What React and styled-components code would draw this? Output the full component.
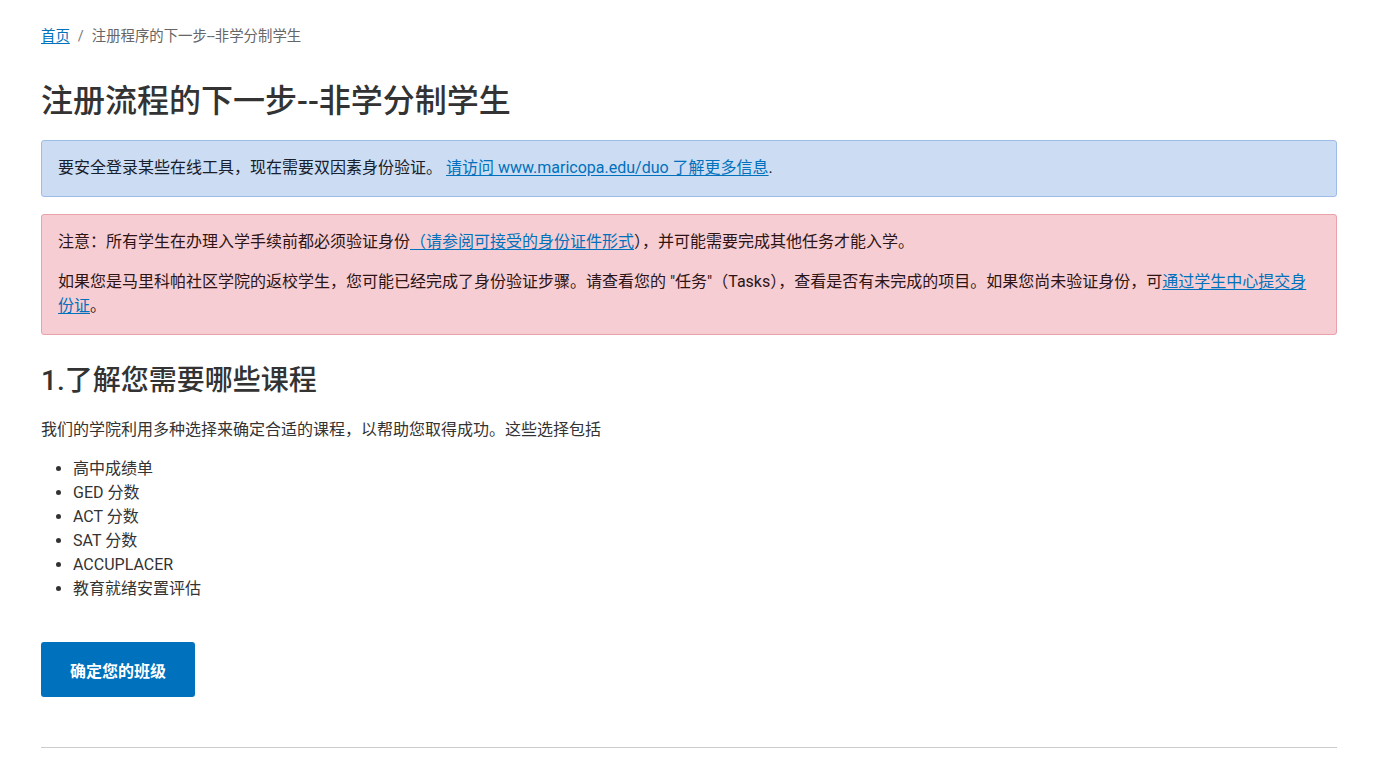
import React from "react";
import styled, { createGlobalStyle } from "styled-components";

const Global = createGlobalStyle`
  * { box-sizing: border-box; }
  body {
    margin: 0;
    background: #fff;
    font-family: Roboto, "Noto Sans CJK SC", sans-serif;
    color: #333;
  }
`;

const Page = styled.main`
  padding: 23px 48px 0 41px;
`;

const Crumbs = styled.nav`
  display: flex;
  align-items: center;
  gap: 8px;
  font-size: 14.4px;
  line-height: 28px;
  color: #666;
`;

const Link = styled.a`
  color: #0071bc;
  text-decoration: underline;
  text-underline-offset: 2px;
`;

const Sep = styled.span`
  color: #777;
`;

const Title = styled.h1`
  margin: 28px 0 17px;
  font-size: 32px;
  line-height: 44px;
  font-weight: 500;
  color: #333;
`;

const Alert = styled.div`
  border: 1px solid ${(p) => (p.$tone === "danger" ? "#e7a2aa" : "#9dbde9")};
  background: ${(p) => (p.$tone === "danger" ? "#f5cdd2" : "#ccdcf2")};
  border-radius: 3px;
  padding: 15px 16px 16px;
  margin-bottom: 17px;
  font-size: 16px;
  line-height: 24px;
  color: ${(p) => (p.$tone === "danger" ? "#2e1416" : "#17202c")};
`;

const AlertP = styled.p`
  margin: 0;
  & + & { margin-top: 16px; }
`;

const H2 = styled.h2`
  margin: 26px 0 17px;
  font-size: 28px;
  line-height: 40px;
  font-weight: 500;
  color: #333;
`;

const Text = styled.p`
  margin: 0 0 15px;
  font-size: 16px;
  line-height: 24px;
  color: #333;
`;

const List = styled.ul`
  margin: 0 0 41px;
  padding-left: 32px;
  font-size: 16px;
  line-height: 24px;
  color: #333;
`;

const Button = styled.button`
  display: inline-flex;
  align-items: center;
  justify-content: center;
  width: 154px;
  height: 55px;
  border: 0;
  border-radius: 3px;
  background: #0071bc;
  color: #fff;
  font-family: inherit;
  font-size: 16px;
  font-weight: 700;
  cursor: pointer;
`;

const Rule = styled.hr`
  margin: 50px 0 0;
  border: 0;
  border-top: 1px solid #cccccc;
`;

export default function App() {
  return (
    <>
      <Global />
      <Page>
        <Crumbs>
          <Link href="#">首页</Link>
          <Sep>/</Sep>
          <span>注册程序的下一步--非学分制学生</span>
        </Crumbs>
        <Title>注册流程的下一步--非学分制学生</Title>
        <Alert>
          <AlertP>
            要安全登录某些在线工具，现在需要双因素身份验证。{" "}
            <Link href="#">请访问 www.maricopa.edu/duo 了解更多信息</Link>.
          </AlertP>
        </Alert>
        <Alert $tone="danger">
          <AlertP>
            注意：所有学生在办理入学手续前都必须验证身份
            <Link href="#">（请参阅可接受的身份证件形式</Link>），并可能需要完成其他任务才能入学。
          </AlertP>
          <AlertP>
            如果您是马里科帕社区学院的返校学生，您可能已经完成了身份验证步骤。请查看您的 "任务"（Tasks），查看是否有未完成的项目。如果您尚未验证身份，可
            <Link href="#">通过学生中心提交身份证</Link>。
          </AlertP>
        </Alert>
        <H2>1.了解您需要哪些课程</H2>
        <Text>我们的学院利用多种选择来确定合适的课程，以帮助您取得成功。这些选择包括</Text>
        <List>
          <li>高中成绩单</li>
          <li>GED 分数</li>
          <li>ACT 分数</li>
          <li>SAT 分数</li>
          <li>ACCUPLACER</li>
          <li>教育就绪安置评估</li>
        </List>
        <Button>确定您的班级</Button>
        <Rule />
      </Page>
    </>
  );
}
